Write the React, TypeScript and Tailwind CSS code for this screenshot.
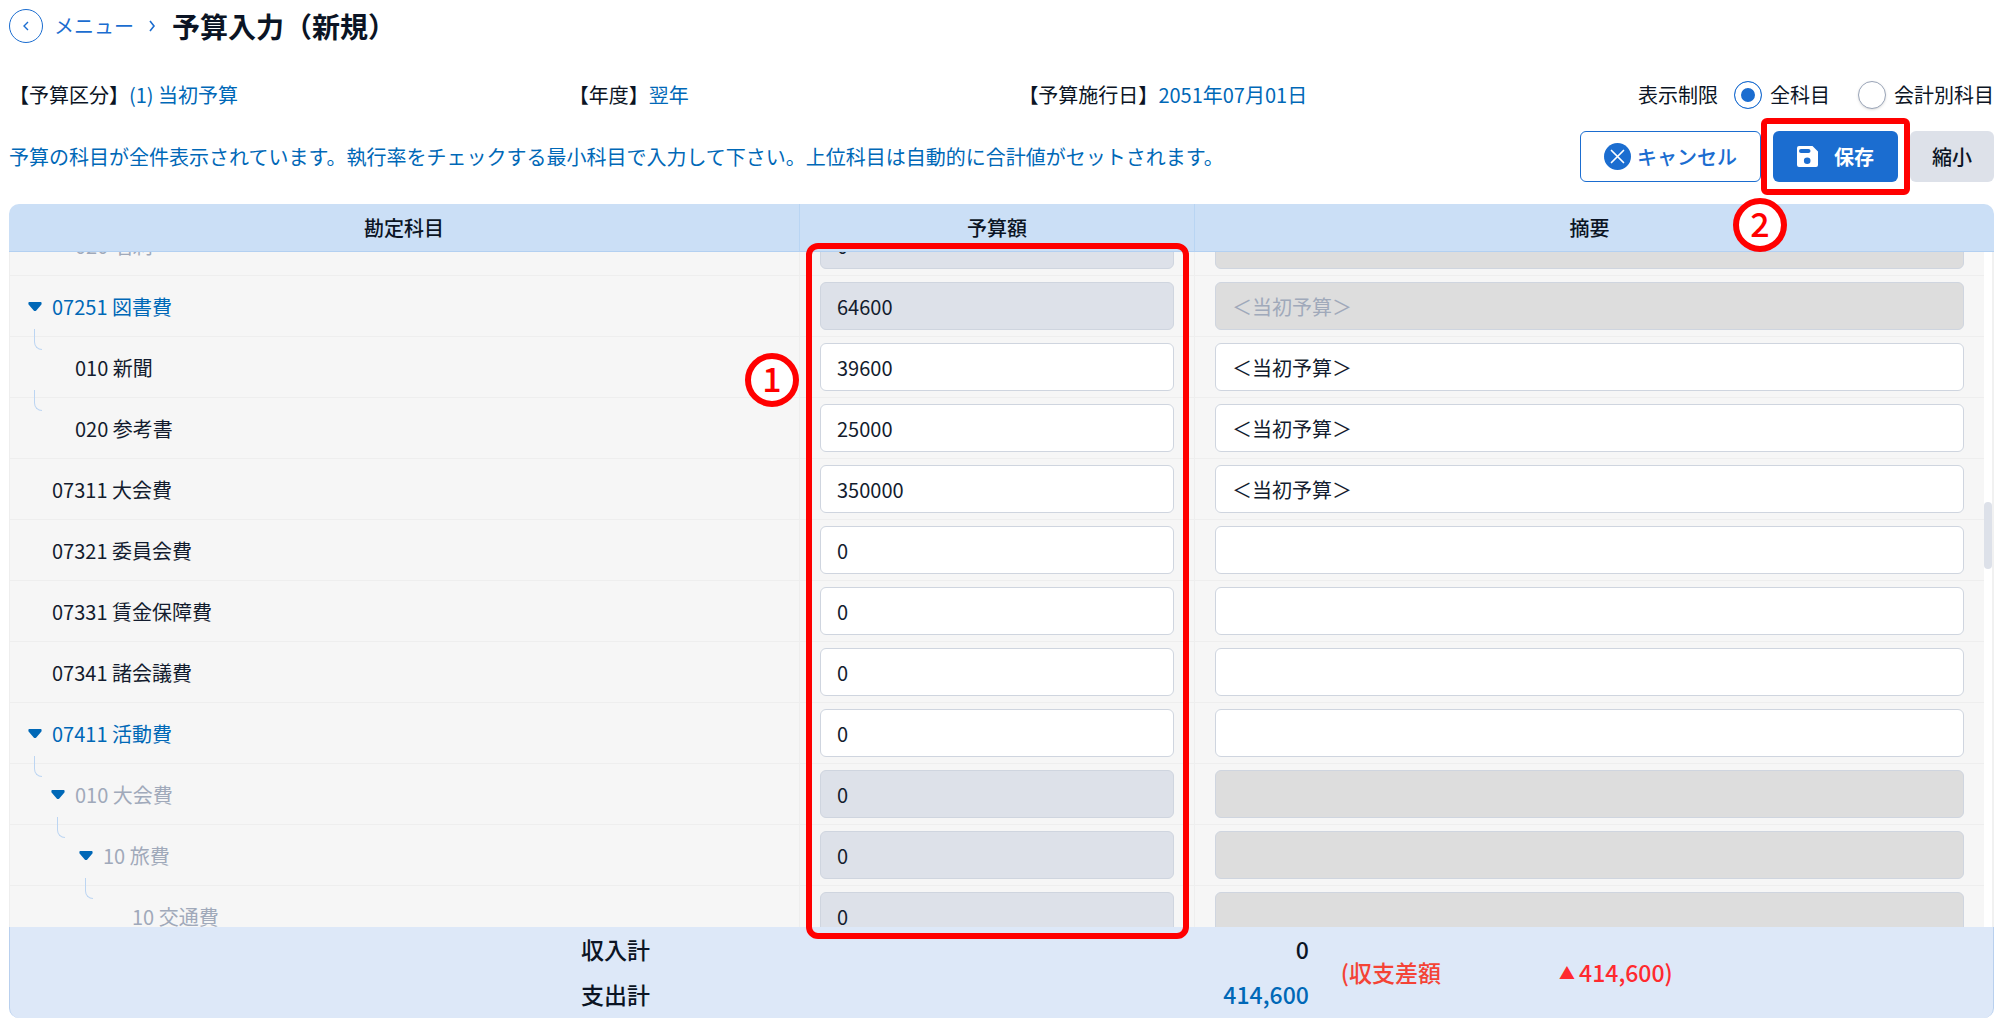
import React, { useState } from "react";

type Row = {
  code: string;
  level: number;
  tone: "normal" | "link" | "muted";
  open?: boolean;
  amount: string;
  memo: string;
  locked?: boolean;
};

const rows: Row[] = [
  { code: "020 名刺", level: 1, tone: "muted", amount: "0", memo: "", locked: true },
  { code: "07251 図書費", level: 0, tone: "link", open: true, amount: "64600", memo: "＜当初予算＞", locked: true },
  { code: "010 新聞", level: 1, tone: "normal", amount: "39600", memo: "＜当初予算＞" },
  { code: "020 参考書", level: 1, tone: "normal", amount: "25000", memo: "＜当初予算＞" },
  { code: "07311 大会費", level: 0, tone: "normal", amount: "350000", memo: "＜当初予算＞" },
  { code: "07321 委員会費", level: 0, tone: "normal", amount: "0", memo: "" },
  { code: "07331 賃金保障費", level: 0, tone: "normal", amount: "0", memo: "" },
  { code: "07341 諸会議費", level: 0, tone: "normal", amount: "0", memo: "" },
  { code: "07411 活動費", level: 0, tone: "link", open: true, amount: "0", memo: "" },
  { code: "010 大会費", level: 1, tone: "muted", open: true, amount: "0", memo: "", locked: true },
  { code: "10 旅費", level: 2, tone: "muted", open: true, amount: "0", memo: "", locked: true },
  { code: "10 交通費", level: 3, tone: "muted", amount: "0", memo: "", locked: true },
];

const indents = ["pl-[18px]", "pl-[41px]", "pl-[69px]", "pl-[98px]"];
const branches = ["", "left-[24px]", "left-[47px]", "left-[75px]"];
const tones = { normal: "text-[#131c2e]", link: "text-[#0068b7]", muted: "text-[#a0a9ba]" };

const Caret = () => (
  <svg width="14" height="10" viewBox="0 0 14 10" fill="#0068b7" aria-hidden="true">
    <path d="M1.6 0h10.8c.9 0 1.2.6 1.2 1.2v.6c0 .5-.2.9-.6 1.3L8.3 8.4c-.8.8-1.8.8-2.6 0L1 3.1C.6 2.7.4 2.3.4 1.8v-.6C.4.6.7 0 1.6 0z" />
  </svg>
);

const Callout = ({ n, className }: { n: number; className: string }) => (
  <span
    className={`absolute flex size-[54px] items-center justify-center rounded-full border-6 border-[#ff0000] bg-white pb-1 text-[34px] leading-none font-medium text-[#ff0000] ${className}`}
  >
    {n}
  </span>
);

const TreeRow = ({ row }: { row: Row }) => (
  <tr className="grid h-[61px] shrink-0 grid-cols-[2fr_1fr_2fr] first:-mt-[37px]">
    <th
      scope="row"
      className={`relative flex items-center border-b border-l border-[#eeeeee] pt-px text-left font-normal ${indents[row.level]} ${tones[row.tone]}`}
    >
      {row.level > 0 && (
        <span className={`absolute -top-2 h-[21px] w-2 rounded-bl-lg border-b border-l border-[#bcd5f2] ${branches[row.level]}`} />
      )}
      {row.open ? (
        <button type="button" aria-label={`${row.code} を閉じる`} className="w-6">
          <Caret />
        </button>
      ) : (
        <span className="w-6" />
      )}
      {row.code}
    </th>
    <td className="flex items-center border-b border-l border-[#eeeeee] px-5">
      <input
        aria-label={`${row.code} 予算額`}
        defaultValue={row.amount}
        disabled={row.locked}
        className="h-12 w-full rounded-md border border-[#cfd5df] bg-white px-4 text-[#131c2e] disabled:bg-[#dde1e9]"
      />
    </td>
    <td className="flex items-center border-b border-l border-[#eeeeee] px-5">
      <input
        aria-label={`${row.code} 摘要`}
        defaultValue={row.memo}
        disabled={row.locked}
        className="h-12 w-full rounded-md border border-[#cfd5df] bg-white px-4 text-[#131c2e] disabled:bg-[#dddddd] disabled:text-[#a0a9ba]"
      />
    </td>
  </tr>
);

const App: React.FC = () => {
  const [scope, setScope] = useState("all");

  const radioClass =
    "size-7 appearance-none rounded-full border border-[#9aa5b8] bg-white shadow-sm checked:border-[#1b6dd0] checked:bg-[#1b6dd0] checked:shadow-[inset_0_0_0_6px_#fff]";

  return (
    <div className="flex h-screen flex-col overflow-hidden bg-white pr-[6px] pb-[9px] pl-[9px] font-['Noto_Sans_CJK_JP',sans-serif] text-[20px] leading-7 text-[#0b1424]">
      <header className="flex items-center pt-[9px]">
        <button
          type="button"
          aria-label="戻る"
          className="flex size-[34px] items-center justify-center rounded-full border border-[#1b6dd0] text-[#1b6dd0]"
        >
          <svg width="8" height="12" viewBox="0 0 8 12" fill="none" stroke="currentColor" strokeWidth="1.4">
            <path d="M6 2 2 6l4 4" />
          </svg>
        </button>
        <a href="#menu" className="ml-[11px] text-[#1b6dd0]">
          メニュー
        </a>
        <svg className="ml-[14px] text-[#1b6dd0]" width="8" height="12" viewBox="0 0 8 12" fill="none" stroke="currentColor" strokeWidth="1.6">
          <path d="M2 1 6 6l-4 5" />
        </svg>
        <h1 className="ml-4 text-[28px] leading-[34px] font-bold">予算入力（新規）</h1>
      </header>

      <div className="mt-[38px] grid grid-cols-[56fr_45fr_62fr_auto] items-center">
        <p>
          【予算区分】<span className="text-[#0068b7]">(1) 当初予算</span>
        </p>
        <p>
          【年度】<span className="text-[#0068b7]">翌年</span>
        </p>
        <p>
          【予算施行日】<span className="text-[#0068b7]">2051年07月01日</span>
        </p>
        <div className="flex items-center" role="radiogroup" aria-label="表示制限">
          <span className="mr-4">表示制限</span>
          <label className="mr-7 flex items-center gap-2">
            <input type="radio" name="scope" checked={scope === "all"} onChange={() => setScope("all")} className={radioClass} />
            全科目
          </label>
          <label className="flex items-center gap-2">
            <input type="radio" name="scope" checked={scope === "each"} onChange={() => setScope("each")} className={radioClass} />
            会計別科目
          </label>
        </div>
      </div>

      <div className="mt-[22px] flex items-center justify-between">
        <p className="text-[#0068b7]">
          予算の科目が全件表示されています。執行率をチェックする最小科目で入力して下さい。上位科目は自動的に合計値がセットされます。
        </p>
        <div className="flex gap-3">
          <button
            type="button"
            className="flex h-[51px] items-center gap-[6px] rounded-md border border-[#1b6dd0] bg-white px-[23px] font-medium text-[#1b6dd0]"
          >
            <svg width="27" height="27" viewBox="0 0 27 27" aria-hidden="true">
              <circle cx="13.5" cy="13.5" r="13.5" fill="#1b6dd0" />
              <path d="m7.5 7.5 12 12m0-12-12 12" stroke="#fff" strokeWidth="1.7" strokeLinecap="round" />
            </svg>
            キャンセル
          </button>
          <div className="relative z-10">
            <button type="button" className="flex h-[51px] items-center gap-4 rounded-md bg-[#1b6dd0] px-6 font-bold text-white">
              <svg width="21" height="21" viewBox="0 0 21 21" fill="currentColor" aria-hidden="true">
                <path
                  fillRule="evenodd"
                  d="M2 0h13.500L21 5.500V19a2 2 0 0 1-2 2H2a2 2 0 0 1-2-2V2a2 2 0 0 1 2-2zm2 3a2 2 0 0 0 0 4h7.500a2 2 0 0 0 0-4zm6.200 8.400a3.300 3.300 0 1 0 0 6.600 3.300 3.300 0 0 0 0-6.600z"
                />
              </svg>
              保存
            </button>
            <span className="pointer-events-none absolute -inset-x-3 -inset-y-[13px] rounded-md border-6 border-[#ff0000]" />
            <Callout n={2} className="top-[67px] -left-10" />
          </div>
          <button type="button" className="h-[51px] rounded-md bg-[#dde1e9] px-[22px] font-medium">
            縮小
          </button>
        </div>
      </div>

      <main className="mt-[22px] flex min-h-0 flex-1 flex-col">
        <div className="relative flex min-h-0 flex-1">
          <table className="flex min-h-0 flex-1 flex-col">
            <thead className="block">
              <tr className="grid h-12 grid-cols-[2fr_1fr_2fr] rounded-tl-[10px] border-b border-[#b3d0f1] bg-[#cbdff6] *:flex *:items-center *:justify-center *:font-medium">
                <th scope="col">勘定科目</th>
                <th scope="col" className="border-l border-[#b9d5f3]">予算額</th>
                <th scope="col" className="border-l border-[#b9d5f3]">摘要</th>
              </tr>
            </thead>
            <tbody className="flex min-h-0 flex-1 flex-col overflow-hidden bg-[#f6f6f6]">
              {rows.map((row, i) => (
                <TreeRow key={i} row={row} />
              ))}
            </tbody>
          </table>
          <div className="flex w-[10px] flex-col">
            <div className="h-12 rounded-tr-[10px] border-b border-[#b3d0f1] bg-[#cbdff6]" />
            <div className="flex flex-1 flex-col border-r-2 border-[#f1f1f1]">
              <div className="flex-[37]" />
              <div className="flex-[10] rounded-full bg-[#dde1e9]" />
              <div className="flex-[53]" />
            </div>
          </div>
          <div className="pointer-events-none absolute inset-0 grid grid-cols-[2fr_1fr_2fr] pr-[10px]">
            <div className="relative col-start-2 mt-[39px] mr-[5px] -mb-3 ml-[7px] rounded-xl border-6 border-[#ff0000]">
              <Callout n={1} className="top-[104px] -left-[67px]" />
            </div>
          </div>
        </div>

        <footer className="flex h-[91px] items-center rounded-b-[10px] border-x border-[#b9d0ee] bg-[#dde8f8] pb-[2px] text-[23px] font-medium">
          <dl className="w-[65.5%] pl-[28.8%] leading-[45px]">
            <div className="flex justify-between">
              <dt>収入計</dt>
              <dd>0</dd>
            </div>
            <div className="flex justify-between">
              <dt>支出計</dt>
              <dd className="text-[#0068b7]">414,600</dd>
            </div>
          </dl>
          <p className="ml-8 flex gap-[118px]">
            <span className="text-[#f44336]">(収支差額</span>
            <span className="flex items-center gap-1 text-[#ff2a2f]">
              <span className="text-[16px]">▲</span>414,600)
            </span>
          </p>
        </footer>
      </main>
    </div>
  );
};

export default App;
